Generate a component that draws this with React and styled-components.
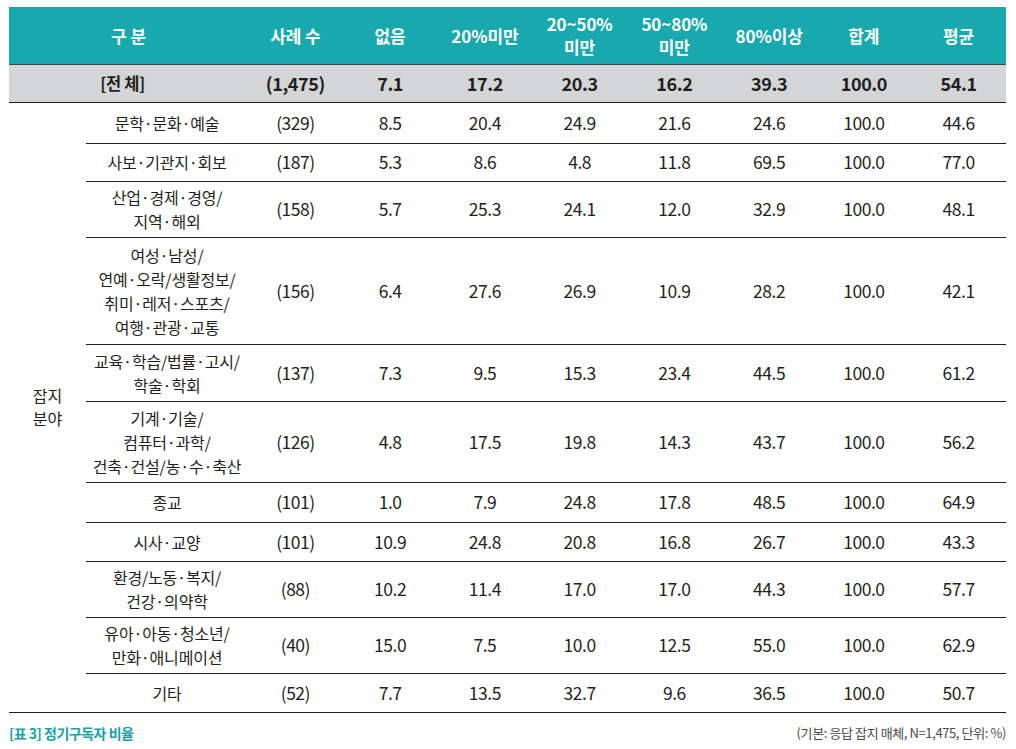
import React from "react";
import styled, { createGlobalStyle } from "styled-components";

const rows = [
  { label: ["문학·문화·예술"], h: 41, n: "(329)", v: ["8.5", "20.4", "24.9", "21.6", "24.6", "100.0", "44.6"] },
  { label: ["사보·기관지·회보"], h: 38, n: "(187)", v: ["5.3", "8.6", "4.8", "11.8", "69.5", "100.0", "77.0"] },
  { label: ["산업·경제·경영/", "지역·해외"], h: 56, n: "(158)", v: ["5.7", "25.3", "24.1", "12.0", "32.9", "100.0", "48.1"] },
  {
    label: ["여성·남성/", "연예·오락/생활정보/", "취미·레저·스포츠/", "여행·관광·교통"],
    h: 107,
    n: "(156)",
    v: ["6.4", "27.6", "26.9", "10.9", "28.2", "100.0", "42.1"],
  },
  { label: ["교육·학습/법률·고시/", "학술·학회"], h: 57, n: "(137)", v: ["7.3", "9.5", "15.3", "23.4", "44.5", "100.0", "61.2"] },
  {
    label: ["기계·기술/", "컴퓨터·과학/", "건축·건설/농·수·축산"],
    h: 81,
    n: "(126)",
    v: ["4.8", "17.5", "19.8", "14.3", "43.7", "100.0", "56.2"],
  },
  { label: ["종교"], h: 40, n: "(101)", v: ["1.0", "7.9", "24.8", "17.8", "48.5", "100.0", "64.9"] },
  { label: ["시사·교양"], h: 39, n: "(101)", v: ["10.9", "24.8", "20.8", "16.8", "26.7", "100.0", "43.3"] },
  { label: ["환경/노동·복지/", "건강·의약학"], h: 56, n: "(88)", v: ["10.2", "11.4", "17.0", "17.0", "44.3", "100.0", "57.7"] },
  { label: ["유아·아동·청소년/", "만화·애니메이션"], h: 56, n: "(40)", v: ["15.0", "7.5", "10.0", "12.5", "55.0", "100.0", "62.9"] },
  { label: ["기타"], h: 39, n: "(52)", v: ["7.7", "13.5", "32.7", "9.6", "36.5", "100.0", "50.7"] },
];

const heads = [["사례 수"], ["없음"], ["20%미만"], ["20~50%", "미만"], ["50~80%", "미만"], ["80%이상"], ["합계"], ["평균"]];
const total = ["(1,475)", "7.1", "17.2", "20.3", "16.2", "39.3", "100.0", "54.1"];

const GlobalStyle = createGlobalStyle`
  html, body {
    margin: 0;
    background: #ffffff;
  }
  body {
    font-family: "Noto Sans CJK KR", "Noto Sans", sans-serif;
    color: #231f20;
  }
`;

const Page = styled.div`
  width: 997px;
  padding: 7px 0 0 9px;
`;

const Table = styled.table`
  width: 997px;
  border-collapse: collapse;
  table-layout: fixed;
`;

const HeadRow = styled.tr`
  background: #17a9ae;
  height: 57px;
  border-bottom: 1px solid #3b4a4c;
`;

const Th = styled.th`
  color: #ffffff;
  font-size: 17px;
  font-weight: 700;
  line-height: 23px;
  text-align: center;
  padding: 0;
  letter-spacing: -0.1px;
`;

const TotalRow = styled.tr`
  background: #d4d5d7;
  height: 38px;
  border-bottom: 1px solid #222222;
`;

const TotalCell = styled.td`
  font-size: ${(p) => (p.$label ? 16.5 : 18)}px;
  font-weight: 700;
  text-align: center;
  padding: 0;
  padding-right: ${(p) => (p.$label ? 12 : 0)}px;
  letter-spacing: -0.4px;
`;

const Row = styled.tr`
  height: ${(p) => p.$h}px;
`;

const GroupCell = styled.td`
  font-size: 16px;
  line-height: 23px;
  text-align: center;
  vertical-align: middle;
  padding: 0;
  border-bottom: 1px solid #222222;
`;

const Cell = styled.td`
  font-size: ${(p) => (p.$num ? 17.5 : 16)}px;
  line-height: 24px;
  text-align: center;
  padding: 0;
  letter-spacing: ${(p) => (p.$num ? -0.5 : -0.2)}px;
  border-bottom: 1px solid #222222;
`;

const Footer = styled.div`
  display: flex;
  justify-content: space-between;
  align-items: center;
  margin-top: 10px;
  width: 997px;
`;

const Caption = styled.div`
  color: #17a2a7;
  font-size: 14px;
  font-weight: 700;
  letter-spacing: -0.5px;
`;

const Note = styled.div`
  color: #4a4a4a;
  font-size: 13px;
  letter-spacing: -0.4px;
`;

const Lines = ({ items }) =>
  items.map((t, i) => (
    <React.Fragment key={i}>
      {i > 0 && <br />}
      {t}
    </React.Fragment>
  ));

export default function App() {
  return (
    <Page>
      <GlobalStyle />
      <Table>
        <colgroup>
          <col style={{ width: 77 }} />
          <col style={{ width: 162 }} />
          {heads.map((_, i) => (
            <col key={i} style={{ width: 94.75 }} />
          ))}
        </colgroup>
        <thead>
          <HeadRow>
            <Th colSpan={2}>구 분</Th>
            {heads.map((h, i) => (
              <Th key={i}>
                <Lines items={h} />
              </Th>
            ))}
          </HeadRow>
        </thead>
        <tbody>
          <TotalRow>
            <TotalCell colSpan={2} $label>
              [전 체]
            </TotalCell>
            {total.map((t, i) => (
              <TotalCell key={i}>{t}</TotalCell>
            ))}
          </TotalRow>
          {rows.map((r, ri) => (
            <Row key={ri} $h={r.h}>
              {ri === 0 && (
                <GroupCell rowSpan={rows.length}>
                  잡지
                  <br />
                  분야
                </GroupCell>
              )}
              <Cell>
                <Lines items={r.label} />
              </Cell>
              <Cell $num>{r.n}</Cell>
              {r.v.map((v, i) => (
                <Cell key={i} $num>
                  {v}
                </Cell>
              ))}
            </Row>
          ))}
        </tbody>
      </Table>
      <Footer>
        <Caption>[표 3] 정기구독자 비율</Caption>
        <Note>(기본: 응답 잡지 매체, N=1,475, 단위: %)</Note>
      </Footer>
    </Page>
  );
}
